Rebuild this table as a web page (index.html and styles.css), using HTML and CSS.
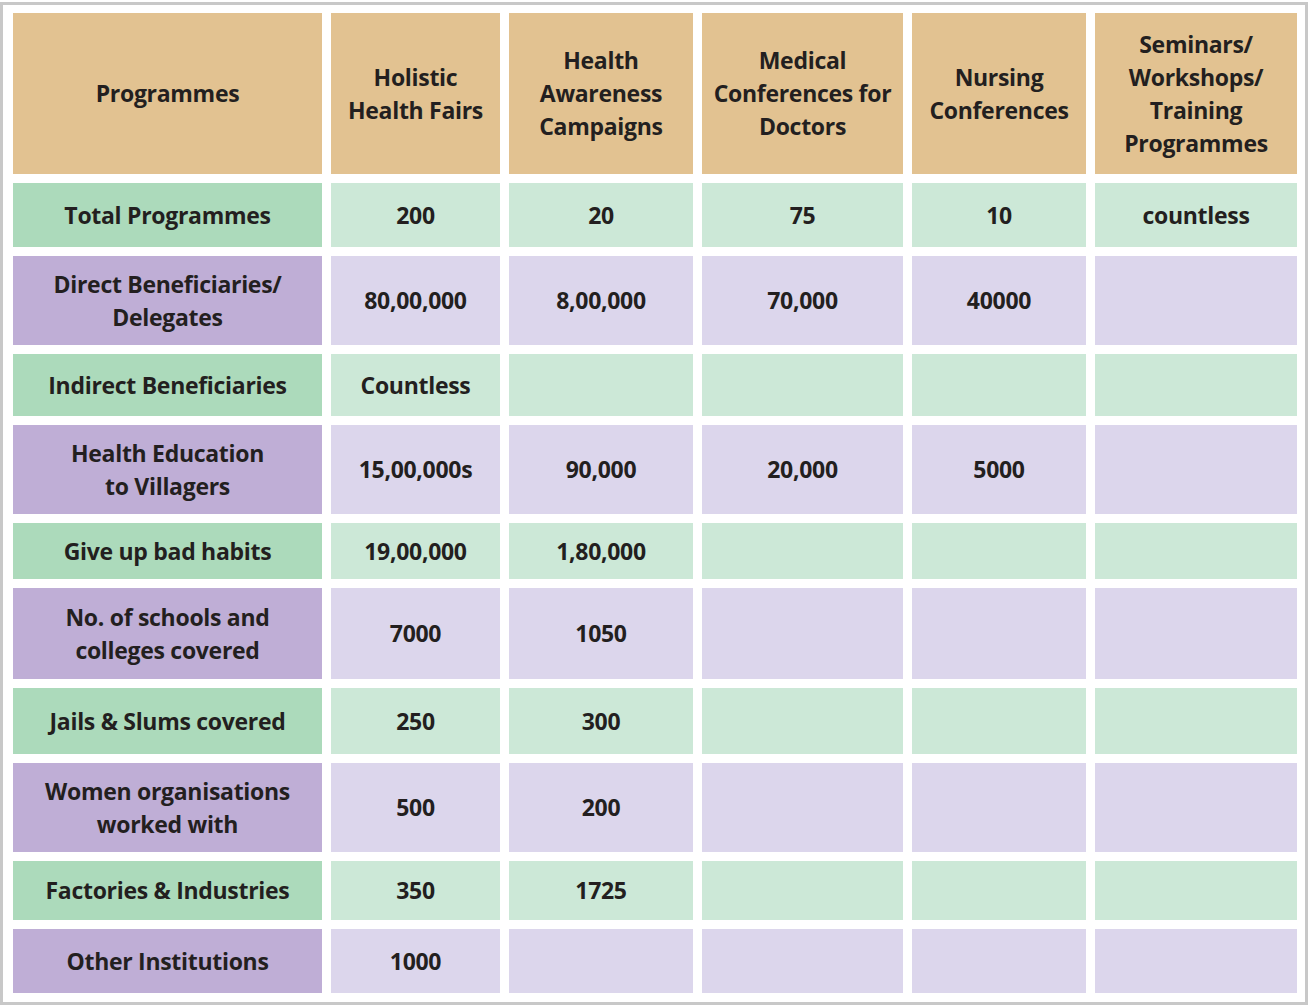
FILE: index.html
```html
<!DOCTYPE html>
<html lang="en">
<head>
<meta charset="utf-8">
<title>Programmes</title>
<link rel="stylesheet" href="styles.css">
</head>
<body>
<div class="frame">
  <div class="table">
    <div class="cell hd">Programmes</div>
    <div class="cell hd">Holistic<br>Health Fairs</div>
    <div class="cell hd">Health<br>Awareness<br>Campaigns</div>
    <div class="cell hd">Medical<br>Conferences for<br>Doctors</div>
    <div class="cell hd">Nursing<br>Conferences</div>
    <div class="cell hd">Seminars/<br>Workshops/<br>Training<br>Programmes</div>

    <div class="cell lg">Total Programmes</div>
    <div class="cell dg">200</div>
    <div class="cell dg">20</div>
    <div class="cell dg">75</div>
    <div class="cell dg">10</div>
    <div class="cell dg">countless</div>

    <div class="cell lp">Direct Beneficiaries/<br>Delegates</div>
    <div class="cell dp">80,00,000</div>
    <div class="cell dp">8,00,000</div>
    <div class="cell dp">70,000</div>
    <div class="cell dp">40000</div>
    <div class="cell dp"></div>

    <div class="cell lg">Indirect Beneficiaries</div>
    <div class="cell dg">Countless</div>
    <div class="cell dg"></div>
    <div class="cell dg"></div>
    <div class="cell dg"></div>
    <div class="cell dg"></div>

    <div class="cell lp">Health Education<br>to Villagers</div>
    <div class="cell dp">15,00,000s</div>
    <div class="cell dp">90,000</div>
    <div class="cell dp">20,000</div>
    <div class="cell dp">5000</div>
    <div class="cell dp"></div>

    <div class="cell lg">Give up bad habits</div>
    <div class="cell dg">19,00,000</div>
    <div class="cell dg">1,80,000</div>
    <div class="cell dg"></div>
    <div class="cell dg"></div>
    <div class="cell dg"></div>

    <div class="cell lp">No. of schools and<br>colleges covered</div>
    <div class="cell dp">7000</div>
    <div class="cell dp">1050</div>
    <div class="cell dp"></div>
    <div class="cell dp"></div>
    <div class="cell dp"></div>

    <div class="cell lg">Jails &amp; Slums covered</div>
    <div class="cell dg">250</div>
    <div class="cell dg">300</div>
    <div class="cell dg"></div>
    <div class="cell dg"></div>
    <div class="cell dg"></div>

    <div class="cell lp">Women organisations<br>worked with</div>
    <div class="cell dp">500</div>
    <div class="cell dp">200</div>
    <div class="cell dp"></div>
    <div class="cell dp"></div>
    <div class="cell dp"></div>

    <div class="cell lg">Factories &amp; Industries</div>
    <div class="cell dg">350</div>
    <div class="cell dg">1725</div>
    <div class="cell dg"></div>
    <div class="cell dg"></div>
    <div class="cell dg"></div>

    <div class="cell lp">Other Institutions</div>
    <div class="cell dp">1000</div>
    <div class="cell dp"></div>
    <div class="cell dp"></div>
    <div class="cell dp"></div>
    <div class="cell dp"></div>
  </div>
</div>
</body>
</html>
```

FILE: styles.css
```css
html, body {
  margin: 0;
  padding: 0;
  background: #ffffff;
}

body {
  padding-top: 2px;
  font-family: "Open Sans", Lato, "Liberation Sans", sans-serif;
}

.frame {
  width: 1308px;
  height: 1003px;
  box-sizing: border-box;
  border: 3px solid #c8c8c8;
  padding: 8px 8px 0 10px;
  background: #ffffff;
}

.table {
  display: grid;
  grid-template-columns: 309px 169px 184px 201px 174px 202px;
  grid-template-rows: 161px 64px 89px 62px 89px 56px 91px 66px 89px 59px 64px;
  gap: 9px;
}

.cell {
  display: flex;
  align-items: center;
  justify-content: center;
  text-align: center;
  font-weight: 700;
  font-size: 23px;
  line-height: 33px;
  letter-spacing: -0.3px;
  color: #231f20;
}

.hd { background: #e2c291; }
.lg { background: #acdabb; }
.dg { background: #cce8d7; }
.lp { background: #bfaed6; }
.dp { background: #dcd6ec; }
```
